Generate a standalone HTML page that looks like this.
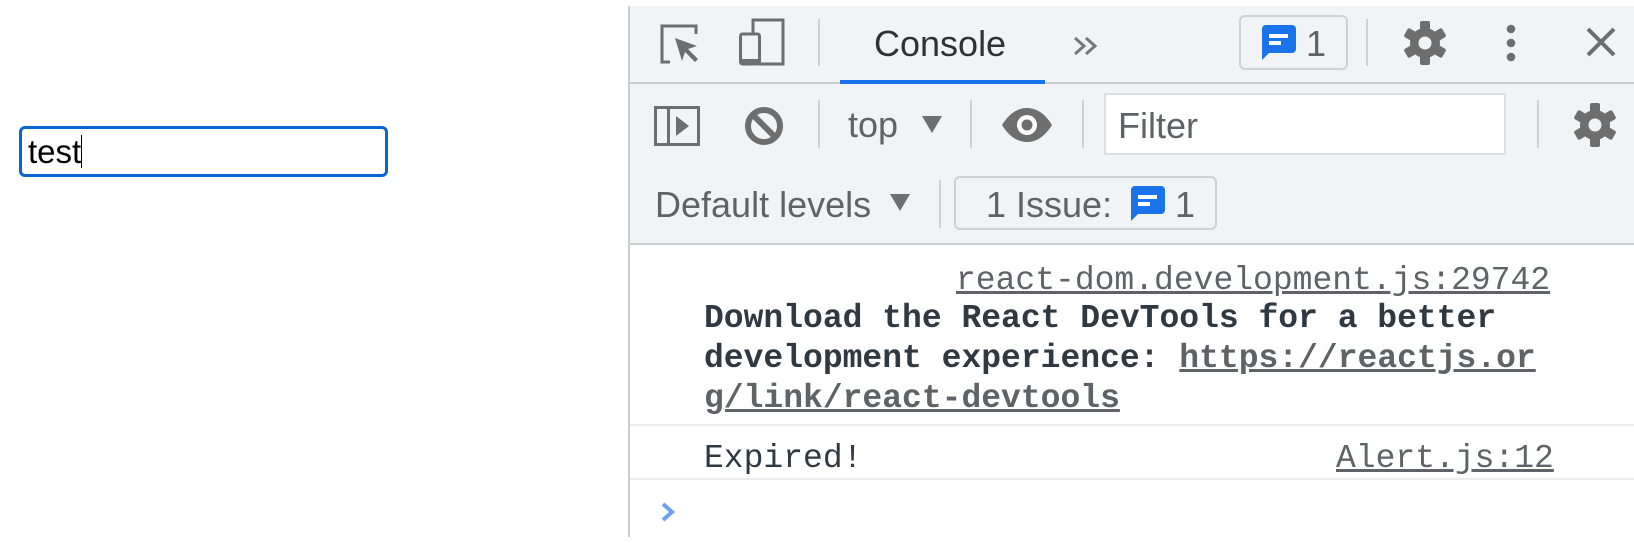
<!DOCTYPE html>
<html><head><meta charset="utf-8"><style>
*{margin:0;padding:0;box-sizing:border-box}
body{width:1634px;height:543px;background:#fff;position:relative;overflow:hidden;font-family:"Liberation Sans",sans-serif}
.a{position:absolute}
.sans{font-family:"Liberation Sans",sans-serif;font-size:36px;color:#5f6368;white-space:nowrap;line-height:1}
.mono{font-family:"Liberation Mono",monospace;font-size:33px;white-space:nowrap;line-height:1;color:#303942}
.sep{position:absolute;width:2px;background:#cfd1d4}
svg{position:absolute;overflow:visible}
</style></head><body>
<!-- input -->
<div class="a" style="left:19px;top:126px;width:369px;height:51px;border:3.5px solid #0b65d1;border-radius:6px"></div>
<div class="a" style="left:28px;top:135px;font-size:33px;color:#000;line-height:1">test</div>
<div class="a" style="left:81px;top:135px;width:1px;height:33px;background:#000"></div>

<!-- devtools panel -->
<div class="a" style="left:628px;top:6px;width:1006px;height:531px;background:#fff;border-left:2px solid #cbcdd0"></div>
<div class="a" style="left:630px;top:6px;width:1004px;height:239px;background:#f1f3f4"></div>
<div class="a" style="left:630px;top:82px;width:1004px;height:2px;background:#cbcdd0"></div>
<div class="a" style="left:630px;top:243px;width:1004px;height:2px;background:#cbcdd0"></div>

<!-- row 1 -->
<svg style="left:660px;top:24px" width="42" height="42" viewBox="0 0 42 42"><path d="M10 38H2V2h34v8" fill="none" stroke="#6e6e6e" stroke-width="3"/><path d="M15 14l22 8-9 3 10 10-3 3-10-10-3 9z" fill="#6e6e6e"/></svg>
<svg style="left:739px;top:18px" width="46" height="48" viewBox="0 0 46 48"><path d="M14 16V2h30v44H20" fill="none" stroke="#6e6e6e" stroke-width="3"/><rect x="1.5" y="16" width="19" height="30" rx="2" fill="none" stroke="#6e6e6e" stroke-width="3"/><rect x="1.5" y="41" width="19" height="5" fill="#6e6e6e"/></svg>
<div class="sep" style="left:818px;top:19px;height:47px"></div>
<div class="a sans" style="left:874px;top:26px;color:#303133">Console</div>
<div class="a" style="left:840px;top:80px;width:205px;height:4px;background:#1a73e8"></div>
<svg style="left:1073px;top:36px" width="26" height="20" viewBox="0 0 26 20"><path d="M2 2l9 8-9 8M13 2l9 8-9 8" fill="none" stroke="#777" stroke-width="3"/></svg>
<div class="a" style="left:1239px;top:15px;width:109px;height:55px;border:2px solid #cfd1d4;border-radius:6px"></div>
<svg style="left:1262px;top:25px" width="34" height="35" viewBox="0 0 34 35"><path d="M4 0h26a4 4 0 0 1 4 4v20a4 4 0 0 1-4 4H7L0 35V4a4 4 0 0 1 4-4z" fill="#1a73e8"/><rect x="7" y="9" width="19" height="4" fill="#fff"/><rect x="7" y="16" width="12" height="4" fill="#fff"/></svg>
<div class="a sans" style="left:1306px;top:26px;color:#5f6368">1</div>
<div class="sep" style="left:1366px;top:19px;height:47px"></div>
<svg style="left:1403px;top:21px" width="44" height="44" viewBox="-22 -22 44 44"><g fill="#6e6e6e"><circle r="15"/><rect x="-5" y="-22" width="10" height="44" rx="2"/><rect x="-5" y="-22" width="10" height="44" rx="2" transform="rotate(60)"/><rect x="-5" y="-22" width="10" height="44" rx="2" transform="rotate(120)"/></g><circle r="6.5" fill="#f1f3f4"/></svg>
<svg style="left:1504px;top:24px" width="14" height="38" viewBox="0 0 14 38"><g fill="#6e6e6e"><circle cx="7" cy="5" r="4.3"/><circle cx="7" cy="19" r="4.3"/><circle cx="7" cy="33" r="4.3"/></g></svg>
<svg style="left:1586px;top:27px" width="30" height="30" viewBox="0 0 30 30"><path d="M2 2L28 28M28 2L2 28" stroke="#6e6e6e" stroke-width="4"/></svg>

<!-- row 2 -->
<svg style="left:654px;top:106px" width="46" height="40" viewBox="0 0 46 40"><rect x="1.5" y="1.5" width="43" height="37" fill="none" stroke="#6e6e6e" stroke-width="3"/><rect x="13" y="1.5" width="3" height="37" fill="#6e6e6e"/><path d="M22 10v20l13-10z" fill="#6e6e6e"/></svg>
<svg style="left:744px;top:106px" width="40" height="40" viewBox="0 0 40 40"><circle cx="20" cy="20" r="16" fill="none" stroke="#6e6e6e" stroke-width="6"/><path d="M9 9L31 31" stroke="#6e6e6e" stroke-width="6"/></svg>
<div class="sep" style="left:818px;top:100px;height:48px"></div>
<div class="a sans" style="left:848px;top:107px">top</div>
<svg style="left:922px;top:116px" width="20" height="17" viewBox="0 0 20 17"><path d="M0 0h20L10 17z" fill="#6e6e6e"/></svg>
<div class="sep" style="left:970px;top:100px;height:48px"></div>
<svg style="left:1002px;top:108px" width="50" height="34" viewBox="0 0 50 34"><path d="M0 17C8 4 17 0 25 0s17 4 25 17C42 30 33 34 25 34S8 30 0 17z" fill="#6e6e6e"/><circle cx="25" cy="17" r="10" fill="#fff"/><circle cx="25" cy="17" r="5.5" fill="#6e6e6e"/></svg>
<div class="sep" style="left:1082px;top:100px;height:48px"></div>
<div class="a" style="left:1104px;top:93px;width:402px;height:62px;background:#fff;border:2px solid #dcdee0"></div>
<div class="a sans" style="left:1118px;top:108px">Filter</div>
<div class="sep" style="left:1537px;top:100px;height:48px"></div>
<svg style="left:1573px;top:103px" width="44" height="44" viewBox="-22 -22 44 44"><g fill="#6e6e6e"><circle r="15"/><rect x="-5" y="-22" width="10" height="44" rx="2"/><rect x="-5" y="-22" width="10" height="44" rx="2" transform="rotate(60)"/><rect x="-5" y="-22" width="10" height="44" rx="2" transform="rotate(120)"/></g><circle r="6.5" fill="#f1f3f4"/></svg>

<!-- row 3 -->
<div class="a sans" style="left:655px;top:187px">Default levels</div>
<svg style="left:890px;top:194px" width="20" height="17" viewBox="0 0 20 17"><path d="M0 0h20L10 17z" fill="#6e6e6e"/></svg>
<div class="sep" style="left:939px;top:180px;height:48px"></div>
<div class="a" style="left:954px;top:176px;width:263px;height:54px;border:2px solid #cfd1d4;border-radius:6px"></div>
<div class="a sans" style="left:986px;top:187px">1 Issue:</div>
<svg style="left:1131px;top:186px" width="34" height="35" viewBox="0 0 34 35"><path d="M4 0h26a4 4 0 0 1 4 4v20a4 4 0 0 1-4 4H7L0 35V4a4 4 0 0 1 4-4z" fill="#1a73e8"/><rect x="7" y="9" width="19" height="4" fill="#fff"/><rect x="7" y="16" width="12" height="4" fill="#fff"/></svg>
<div class="a sans" style="left:1175px;top:187px">1</div>

<!-- console -->
<div class="a mono" style="left:956px;top:264px;color:#5f6368;text-decoration:underline">react-dom.development.js:29742</div>
<div class="a mono" style="left:704px;font-weight:bold;line-height:40px;top:299px;width:860px;white-space:normal">Download the React DevTools for a better<br>development experience: <span style="color:#5f6368;text-decoration:underline">https://reactjs.or</span><br><span style="color:#5f6368;text-decoration:underline">g/link/react-devtools</span></div>
<div class="a" style="left:630px;top:424px;width:1004px;height:2px;background:#ececec"></div>
<div class="a mono" style="left:704px;top:442px">Expired!</div>
<div class="a mono" style="left:1336px;top:442px;color:#5f6368;text-decoration:underline">Alert.js:12</div>
<div class="a" style="left:630px;top:478px;width:1004px;height:2px;background:#ececec"></div>
<svg style="left:660px;top:502px" width="16" height="20" viewBox="0 0 16 20"><path d="M3 2l9 8-9 8" fill="none" stroke="#6ea0f2" stroke-width="4"/></svg>
</body></html>
